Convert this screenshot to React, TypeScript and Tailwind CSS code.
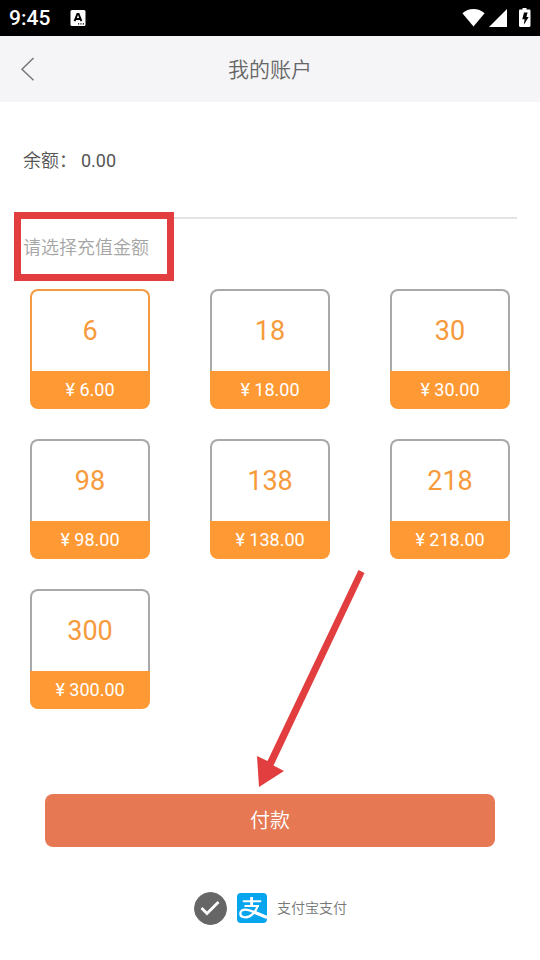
import { useState } from "react";

const amounts = [6, 18, 30, 98, 138, 218, 300];

function StatusBar() {
  return (
    <div className="flex h-9 items-center bg-black px-[9px] text-white">
      <span className="pt-px text-[21px] font-medium">9:45</span>
      <svg className="ml-5 h-4 w-4" viewBox="0 0 16 16" aria-hidden="true">
        <rect x="0.5" y="0" width="15" height="16" rx="1.5" fill="#fff" />
        <path
          d="M4.600 11.200 7.400 4h1.200l2.800 7.200M5.800 9h4.400"
          fill="none"
          stroke="#000"
          strokeWidth="1.900"
        />
        <path d="M8 13.200h1.200v1.200H8zM10.400 13.200h1.200v1.200h-1.200zM12.800 13.200H14v1.200h-1.200z" />
      </svg>
      <div className="ml-auto flex items-center gap-[3px]">
        <svg className="h-5 w-6" viewBox="0 0 24 20" aria-hidden="true">
          <path
            d="M12.500 18.500 1.400 5.200C4.500 2.500 8.300 1 12.500 1s8 1.500 11.100 4.200z"
            fill="#fff"
          />
        </svg>
        <svg className="h-5 w-5" viewBox="0 0 20 20" aria-hidden="true">
          <path d="M19 1v18H1z" fill="#fff" />
        </svg>
        <svg className="ml-2 h-5 w-3" viewBox="0 0 12 20" aria-hidden="true">
          <path
            d="M3.500 0h4v1.500h2.800c.7 0 1.200.5 1.200 1.200v15.100c0 .7-.5 1.200-1.200 1.200H1.200C.500 19 0 18.500 0 17.800V2.700c0-.7.5-1.200 1.200-1.200h2.300z"
            fill="#fff"
          />
          <path d="M5 4.500h3.600L7.400 8.900h2.300L4.800 16.800l.8-5.500H3.300z" fill="#000" />
        </svg>
      </div>
    </div>
  );
}

function AlipayLogo() {
  return (
    <svg className="h-[30px] w-[30px]" viewBox="0 0 30 30" aria-hidden="true">
      <rect width="30" height="30" rx="4" fill="#06a5ee" />
      <g fill="none" stroke="#fff">
        <path d="M5.800 8.300h18.400M7.500 13h14.500" strokeWidth="2" />
        <path d="M14.600 4v9" strokeWidth="2.800" />
        <path
          d="M20.800 12.500c-1.600 5.500-6.300 11.800-12.300 11.800-3.500 0-5.200-1.700-5.200-3.700 0-2.400 2.200-4 5.100-4 5.600 0 9.800 3.700 21.600 7.600"
          strokeWidth="2.300"
        />
        <path d="m17.500 19.300 12.500 5.200" strokeWidth="3.200" />
      </g>
    </svg>
  );
}

export default function App() {
  const [selected, setSelected] = useState(6);
  const [alipay, setAlipay] = useState(true);

  return (
    <div className="min-h-screen bg-white font-['Roboto','Noto_Sans_CJK_SC',sans-serif] text-[#666]">
      <StatusBar />

      <header className="grid h-[66px] grid-cols-[56px_1fr_56px] items-center bg-[#f5f5f7]">
        <button type="button" aria-label="返回" className="flex h-full items-center pl-5">
          <svg className="h-6 w-4" viewBox="0 0 16 24" fill="none" aria-hidden="true">
            <path d="M13.500 1 2 12.200l11.500 11" stroke="#777" strokeWidth="1.500" />
          </svg>
        </button>
        <h1 className="pt-1 text-center text-[21px] font-[350]">我的账户</h1>
      </header>

      <main className="relative">
        <p className="mx-[23px] flex h-[115px] items-center gap-1 pt-[3px] text-lg text-[#555]">
          <span className="font-[350]">余额：</span>
          <span>0.00</span>
        </p>
        <hr className="mx-[23px] border-t-2 border-[#e3e5e5]" />

        <form onSubmit={(e) => e.preventDefault()}>
          <fieldset className="-mt-[7px]">
            <legend className="relative ml-[14px] flex h-[69px] w-[160px] items-center border-[7px] border-[#e23e3f] bg-white pt-[3px] pl-[2px] text-lg font-[350] whitespace-nowrap text-[#a5a5a5]">
              请选择充值金额
            </legend>

            <div className="mx-[30px] mt-2 grid grid-cols-[repeat(3,120px)] justify-between gap-y-[30px]">
              {amounts.map((amount) => (
                <label
                  key={amount}
                  className="relative flex h-[120px] cursor-pointer flex-col text-center"
                >
                  <input
                    type="radio"
                    name="amount"
                    value={amount}
                    checked={selected === amount}
                    onChange={() => setSelected(amount)}
                    className="peer sr-only"
                  />
                  <span className="flex h-[82px] items-center justify-center rounded-t-lg border-2 border-b-0 border-[#a9a9a9] text-[27px] text-[#f79a3c] peer-checked:border-[#f29b43]">
                    {amount}
                  </span>
                  <span className="flex flex-1 items-center justify-center rounded-b-lg bg-[#ff9933] text-lg text-white">
                    ¥ {amount.toFixed(2)}
                  </span>
                </label>
              ))}
            </div>
          </fieldset>

          <div className="px-[45px] pt-[85px]">
            <button
              type="submit"
              className="h-[53px] w-full rounded-lg bg-[#e67853] text-xl font-[350] text-white"
            >
              付款
            </button>
          </div>

          <label className="mt-11 flex cursor-pointer items-center justify-center gap-[10px] pb-8">
            <span className="grid h-[34px] w-[34px] place-items-center">
              <input
                type="checkbox"
                checked={alipay}
                onChange={(e) => setAlipay(e.target.checked)}
                className="peer col-start-1 row-start-1 h-[33px] w-[33px] appearance-none rounded-full border border-[#666] checked:bg-[#666]"
              />
              <svg
                className="pointer-events-none invisible col-start-1 row-start-1 h-5 w-5 peer-checked:visible"
                viewBox="0 0 20 20"
                fill="none"
                aria-hidden="true"
              >
                <path d="m1.500 10 5.500 5.500L18.500 4" stroke="#fff" strokeWidth="2.800" />
              </svg>
            </span>
            <AlipayLogo />
            <span className="text-sm font-[350] text-[#777]">支付宝支付</span>
          </label>
        </form>

        {/* pointer towards the pay button */}
        <svg
          className="pointer-events-none absolute top-[468px] left-1/2 -ml-4 h-[220px] w-[112px]"
          viewBox="0 0 112 220"
          fill="#e23e3f"
          aria-hidden="true"
        >
          <path d="M104.500 0 110.500 3 19.500 195.500 30 201 5 217 3 186 13.500 191z" />
        </svg>
      </main>
    </div>
  );
}
